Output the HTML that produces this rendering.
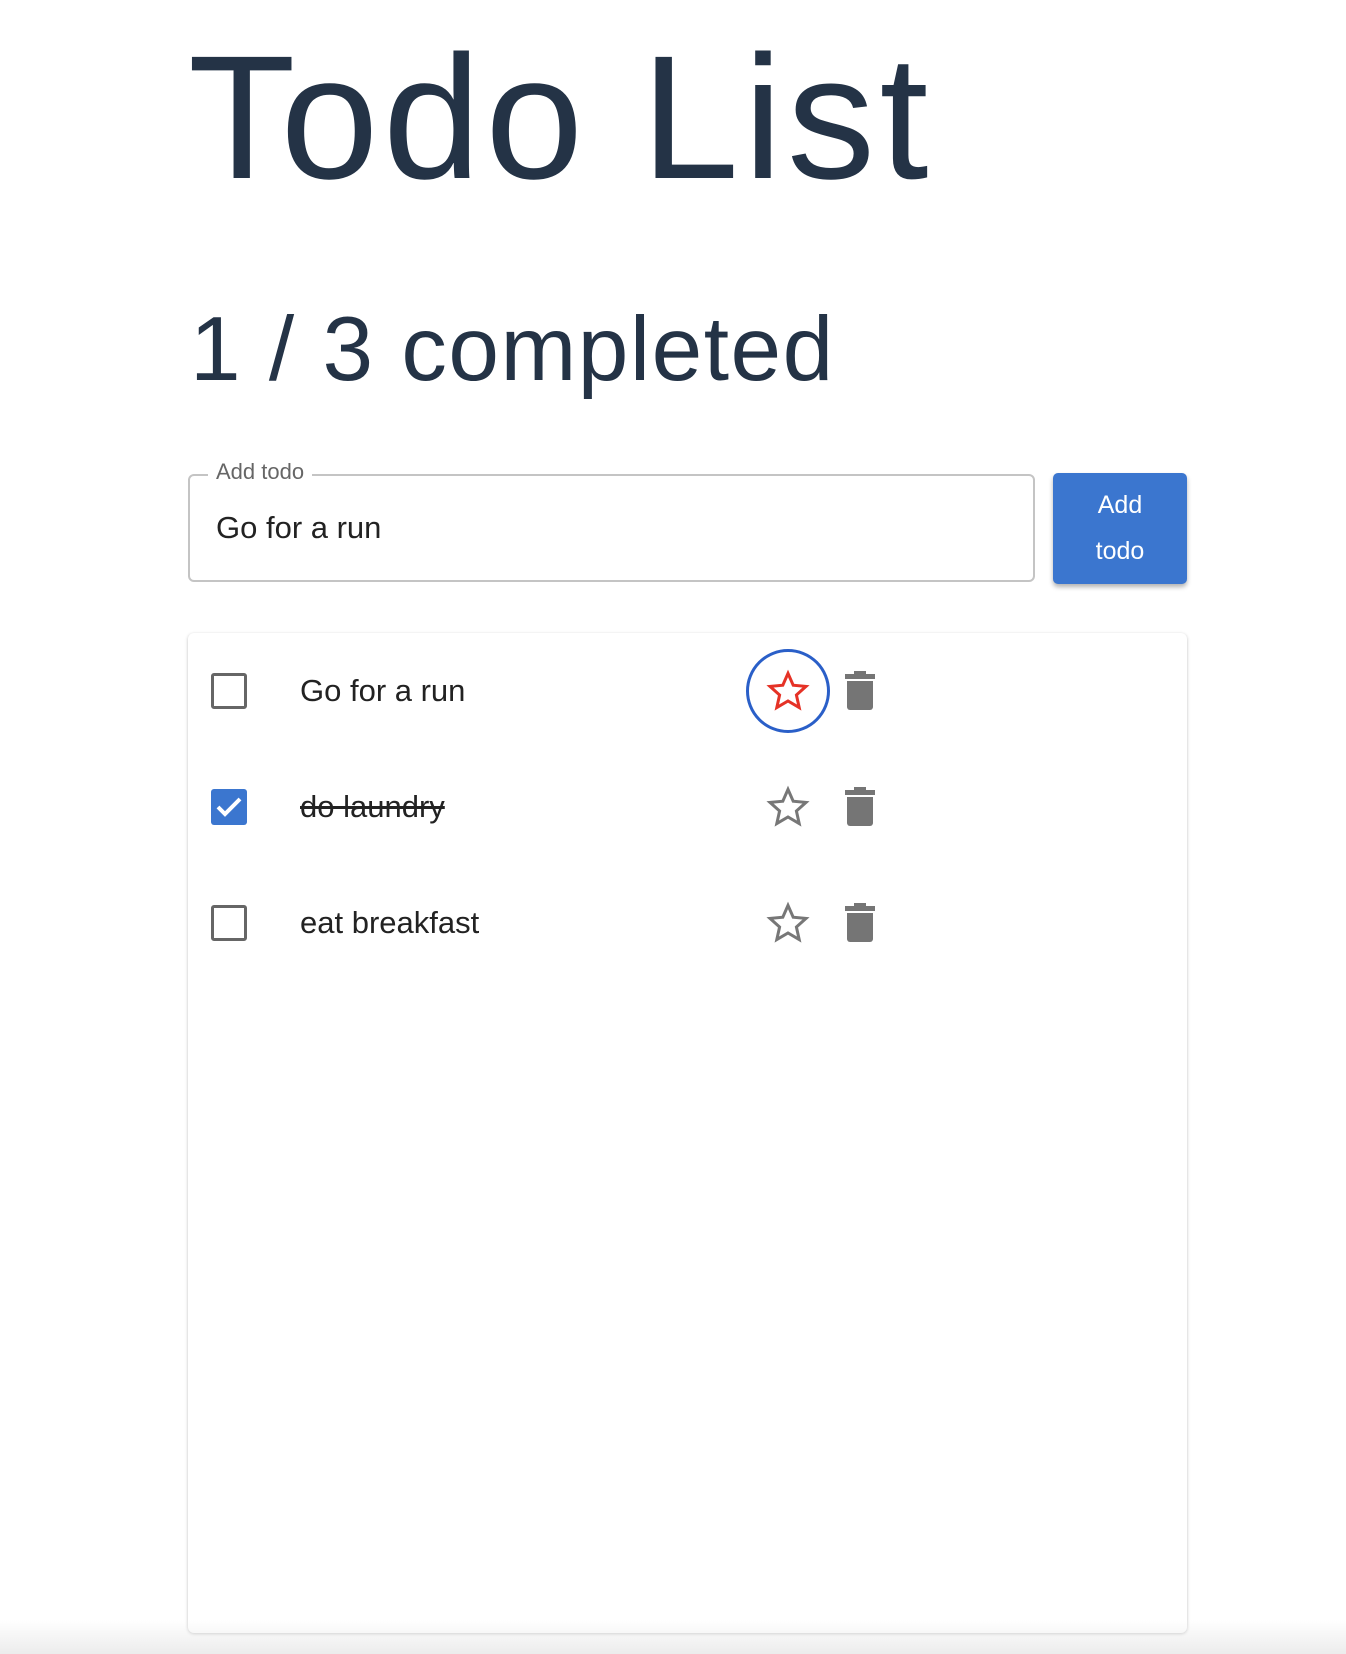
<!DOCTYPE html>
<html><head><meta charset="utf-8"><style>
html,body{margin:0;padding:0;background:#fff;width:1346px;height:1654px;overflow:hidden;position:relative;font-family:"Liberation Sans",Arial,sans-serif;}
.a{position:absolute;}
h1{position:absolute;left:188px;top:30px;margin:0;font-weight:400;font-size:176px;line-height:176px;color:#243346;letter-spacing:4.5px;white-space:nowrap;}
h2{position:absolute;left:190px;top:295px;margin:0;font-weight:400;font-size:91px;line-height:110px;color:#243346;white-space:nowrap;letter-spacing:1.5px;}
.inp{left:188px;top:474px;width:847px;height:108px;border:2px solid #c4c4c4;border-radius:6px;box-sizing:border-box;}
.lbl{left:208px;top:458px;background:#fff;padding:0 8px;font-size:22px;color:#666;line-height:28px;}
.val{left:216px;top:509px;font-size:31px;color:#222;line-height:38px;}
.btn{left:1053px;top:473px;width:134px;height:111px;background:#3b76cf;border-radius:5px;box-shadow:0 3px 5px rgba(0,0,0,.3);color:#fff;font-size:25px;text-align:center;line-height:46px;padding-top:9px;box-sizing:border-box;}
.card{left:188px;top:633px;width:999px;height:1000px;border-radius:6px;box-shadow:0 1px 3px rgba(0,0,0,.25);background:#fff;}
.cb{width:30px;height:30px;border:3px solid #666;border-radius:3px;}
.cbc{width:36px;height:36px;background:#3b76cf;border-radius:3px;}
.txt{font-size:31px;color:#222;line-height:36px;}
.bot{left:0;top:1620px;width:1346px;height:34px;background:linear-gradient(#fff0,#ececec);}
</style></head><body>
<h1>Todo List</h1>
<h2>1 / 3 completed</h2>
<div class="a inp"></div>
<div class="a lbl">Add todo</div>
<div class="a val">Go for a run</div>
<div class="a btn">Add<br>todo</div>
<div class="a card"></div>

<div class="a cb" style="left:211px;top:673px"></div>
<div class="a txt" style="left:300px;top:673px">Go for a run</div>
<div class="a" style="left:746px;top:649px;width:78px;height:78px;border:3px solid #2a5fc8;border-radius:50%"></div>

<div class="a cbc" style="left:211px;top:789px"><svg width="36" height="36" viewBox="0 0 36 36"><path d="M7 18l7 7 15-15" stroke="#fff" stroke-width="4" fill="none"/></svg></div>
<div class="a txt" style="left:300px;top:789px;text-decoration:line-through">do laundry</div>

<div class="a cb" style="left:211px;top:905px"></div>
<div class="a txt" style="left:300px;top:905px">eat breakfast</div>

<svg class="a" style="left:764px;top:667px" width="48" height="48" viewBox="0 0 24 24"><path d="M12 3.2l2.6 5.9 6.4.6-4.8 4.3 1.4 6.3L12 17l-5.6 3.3 1.4-6.3L3 9.7l6.4-.6z" fill="none" stroke="#e53226" stroke-width="1.5"/></svg>
<svg class="a" style="left:764px;top:783px" width="48" height="48" viewBox="0 0 24 24"><path d="M12 3.2l2.6 5.9 6.4.6-4.8 4.3 1.4 6.3L12 17l-5.6 3.3 1.4-6.3L3 9.7l6.4-.6z" fill="none" stroke="#777" stroke-width="1.5"/></svg>
<svg class="a" style="left:764px;top:899px" width="48" height="48" viewBox="0 0 24 24"><path d="M12 3.2l2.6 5.9 6.4.6-4.8 4.3 1.4 6.3L12 17l-5.6 3.3 1.4-6.3L3 9.7l6.4-.6z" fill="none" stroke="#777" stroke-width="1.5"/></svg>

<svg class="a" style="left:845px;top:671px" width="30" height="39" viewBox="0 0 30 39"><path d="M9 0h12v3h9v5H0V3h9z" fill="#757575"/><path d="M2 10h26v26a3 3 0 0 1-3 3H5a3 3 0 0 1-3-3z" fill="#757575"/></svg>
<svg class="a" style="left:845px;top:787px" width="30" height="39" viewBox="0 0 30 39"><path d="M9 0h12v3h9v5H0V3h9z" fill="#757575"/><path d="M2 10h26v26a3 3 0 0 1-3 3H5a3 3 0 0 1-3-3z" fill="#757575"/></svg>
<svg class="a" style="left:845px;top:903px" width="30" height="39" viewBox="0 0 30 39"><path d="M9 0h12v3h9v5H0V3h9z" fill="#757575"/><path d="M2 10h26v26a3 3 0 0 1-3 3H5a3 3 0 0 1-3-3z" fill="#757575"/></svg>
<div class="a bot"></div>
</body></html>
